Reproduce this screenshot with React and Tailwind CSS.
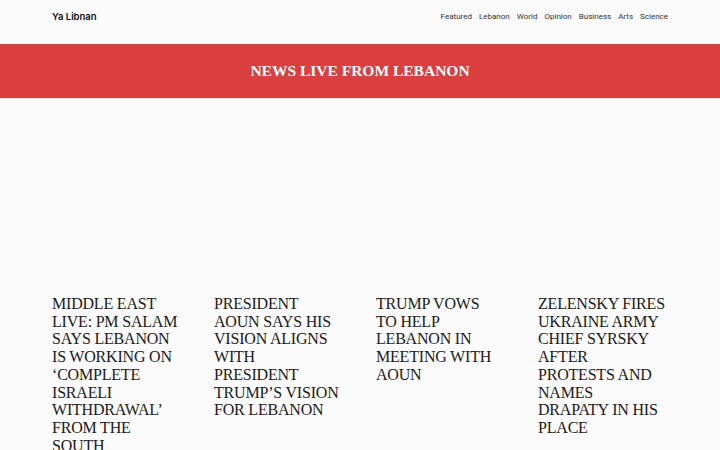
import React from 'react';

const NAV = ['Featured', 'Lebanon', 'World', 'Opinion', 'Business', 'Arts', 'Science'];

const STORIES = [
  { id: 1, title: 'Middle East live: PM Salam says Lebanon is working on ‘complete Israeli withdrawal’ from the south' },
  { id: 2, title: 'President Aoun says his vision aligns with President Trump’s vision for Lebanon' },
  { id: 3, title: 'Trump vows to help Lebanon in meeting with Aoun' },
  { id: 4, title: 'Zelensky fires Ukraine army chief Syrsky after protests and names Drapaty in his place' },
];

const serif = { fontFamily: '"Liberation Serif", "DejaVu Serif", serif' };

const App = () => (
  <div className="min-h-screen bg-[#fafafa] text-[#111]">
    <header className="h-[44px] pb-[10px] px-[52px] flex items-center justify-between">
      <a className="font-['Inter',sans-serif] text-[9.5px] font-semibold text-[#111]">Ya Libnan</a>
      <nav className="flex gap-[7px] font-['Roboto',sans-serif] text-[8px] text-[#333]">
        {NAV.map((n) => (
          <a key={n}>{n}</a>
        ))}
      </nav>
    </header>

    <div className="h-[54px] bg-[#db3e3e] flex items-center justify-center">
      <h1 style={serif} className="text-white font-bold text-[15.5px] uppercase">
        News live from Lebanon
      </h1>
    </div>

    <main className="px-[52px] pt-[197px] grid grid-cols-[repeat(4,127px)] gap-x-[35px]">
      {STORIES.map((s) => (
        <article key={s.id}>
          <h2 style={serif} className="uppercase text-[16px] tracking-[-0.2px] leading-[17.7px] text-[#1a1a1a]">
            {s.title}
          </h2>
        </article>
      ))}
    </main>
  </div>
);

export default App;
